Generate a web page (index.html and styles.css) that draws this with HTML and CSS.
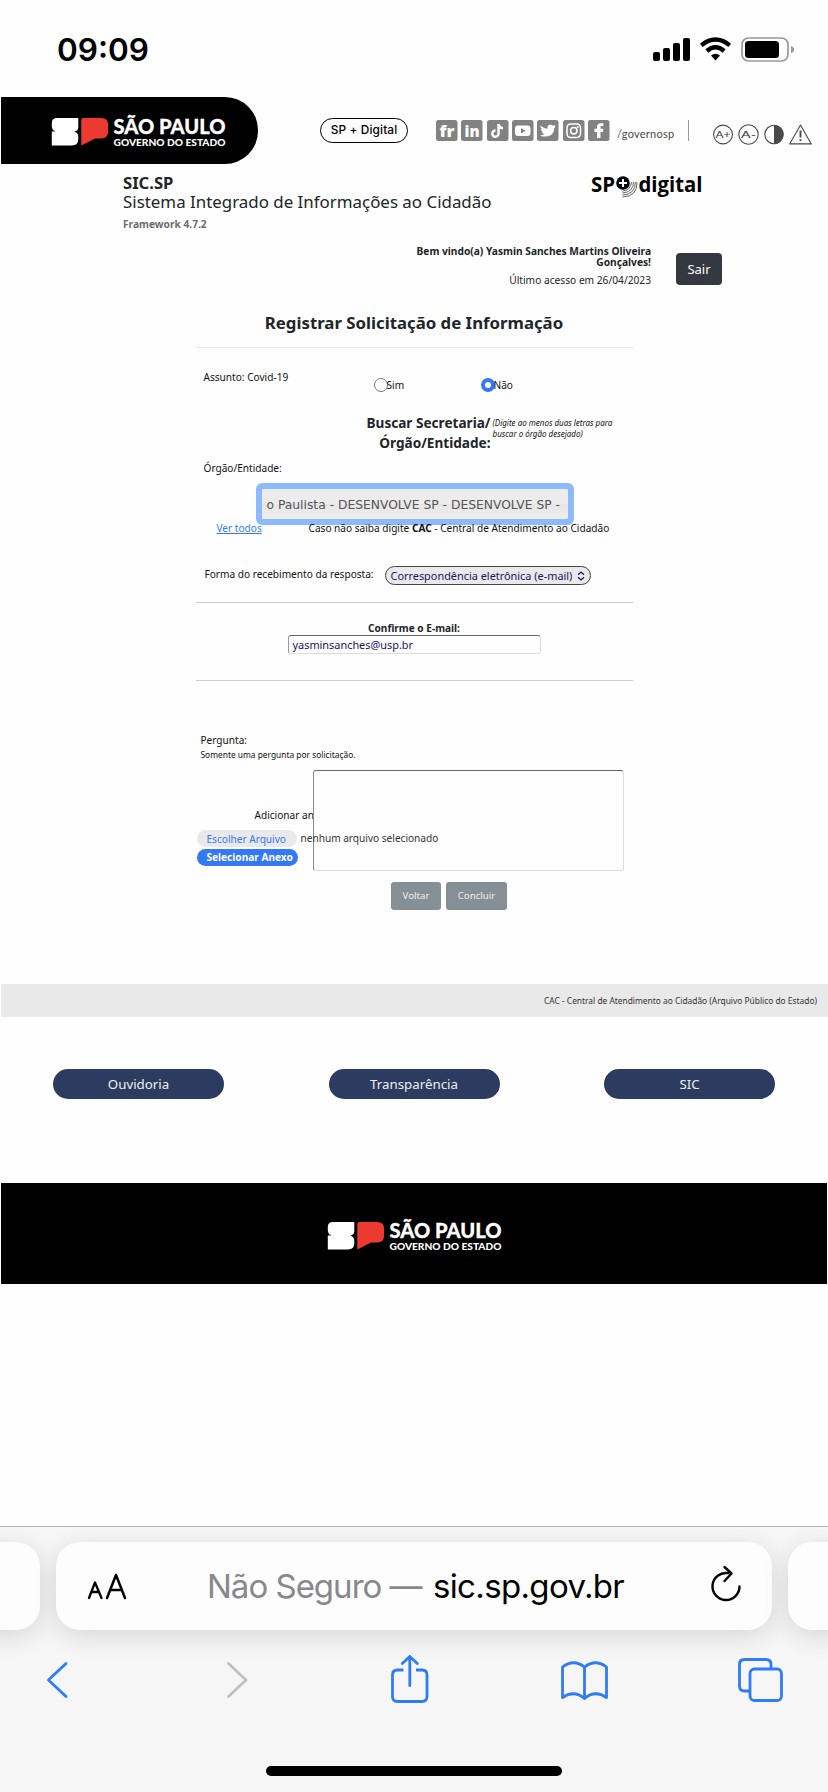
FILE: index.html
```html
<!DOCTYPE html>
<html lang="pt-BR">
<head>
<meta charset="utf-8">
<title>SIC.SP</title>
<link rel="stylesheet" href="styles.css">
</head>
<body>
<svg width="0" height="0" class="defs">
  <symbol id="sp-logo" viewBox="0 0 176 34">
    <path fill="#fff" d="M6 5H27.300V14.500Q27.300 17 25 18L23.500 18.700Q27.300 19.500 27.300 24V26Q27.300 32.500 21 32.500H.8V18.500H4.500Q.8 17 .8 13V10Q.8 5 6 5Z"/>
    <path fill="#ec3a31" d="M32 5H50Q57 5 57 11V19Q57 25.500 50 25.500H44L30.300 32.500V7Q30.300 5 32 5Z"/>
    <text x="62.500" y="20.500" class="logo-a" textLength="112" lengthAdjust="spacingAndGlyphs">SÃO PAULO</text>
    <text x="62.500" y="32.600" class="logo-b" textLength="112" lengthAdjust="spacingAndGlyphs">GOVERNO DO ESTADO</text>
  </symbol>
</svg>

<header class="status">
  <span class="clock">09:09</span>
  <svg width="144" height="26" viewBox="0 0 144 26">
    <rect x="0" y="15" width="7" height="9" rx="2"/><rect x="10" y="11" width="7" height="13" rx="2"/><rect x="20" y="6" width="7" height="18" rx="2"/><rect x="30" y="1" width="7" height="23" rx="2"/>
    <g fill="none" stroke="#000" stroke-width="4.300"><path d="M48.300 8.300Q62.500-3.300 76.700 8.300"/><path d="M53.800 14Q62.500 6.500 71.200 14"/></g>
    <path d="M58 18.500Q62.500 14.800 67 18.500L62.500 23.500Z"/>
    <rect x="89" y="1" width="46" height="23" rx="6.500" fill="none" stroke="#999" stroke-width="1.700"/>
    <rect x="92" y="4" width="34" height="17" rx="3.500"/>
    <path fill="#999" d="M138 9Q141 10 141 12.500T138 16Z"/>
  </svg>
</header>

<section class="top">
  <div class="brand"><svg width="176" height="34"><use href="#sp-logo"/></svg></div>
  <a class="digital">SP + Digital</a>
  <svg class="social" width="175" height="22" viewBox="0 0 175 22">
    <g fill="#828282"><rect width="21.500" height="21" rx="2.500"/><rect x="25" width="21.500" height="21" rx="2.500"/><rect x="51" width="21.500" height="21" rx="2.500"/><rect x="76" width="21.500" height="21" rx="2.500"/><rect x="101" width="21.500" height="21" rx="2.500"/><rect x="127" width="21.500" height="21" rx="2.500"/><rect x="152" width="21.500" height="21" rx="2.500"/></g>
    <text x="3.500" y="16.500" class="soc" textLength="15" lengthAdjust="spacingAndGlyphs">fr</text>
    <text x="28.500" y="16.500" class="soc" textLength="15" lengthAdjust="spacingAndGlyphs">in</text>
    <path d="M62.500 4V13.500A3.100 3.100 0 1 1 59.500 10.500M62.500 4Q63.200 8 67 8.200" fill="none" stroke="#fff" stroke-width="2.400"/>
    <rect x="79" y="5.500" width="15.500" height="10.500" rx="3" fill="#fff"/><path d="M85 8V13.500L89.500 10.700Z" fill="#828282"/>
    <path fill="#fff" d="M104.500 5.500Q107.500 8.500 111.500 8.700Q111 5.500 113.500 4.800Q115.500 4.200 117 5.700L119.400 4.900L118.300 6.700L120 6.300L118.300 8.200Q118.300 12.500 115 15Q110 18 104 15.400Q107 15.400 108.500 14Q106.300 13.500 105.700 11.800H107Q104.800 11 104.600 9L106 9.300Q104 7.500 104.500 5.500Z"/>
    <g fill="none" stroke="#fff" stroke-width="1.500"><rect x="131" y="4" width="13.500" height="13.500" rx="3.700"/><circle cx="137.800" cy="10.700" r="3.200"/></g><circle cx="141.700" cy="6.900" r="1" fill="#fff"/>
    <path fill="#fff" d="M161 18V12H158.500V8.700H161V7Q161 3.200 165 3.200H167.300V6.100H165.800Q164.500 6.100 164.500 7.400V8.700H167.300L166.800 12H164.500V18Z"/>
  </svg>
  <span class="gov">/governosp</span>
  <i class="sep"></i>
  <svg class="access" width="100" height="22" viewBox="0 0 100 22">
    <g fill="none" stroke="#4a4a4a" stroke-width="1.100"><circle cx="10" cy="10.500" r="9.400"/><circle cx="35.500" cy="10.500" r="9.700"/><circle cx="61" cy="10.500" r="9.200"/><path d="M87.500 1L98.300 19.900H76.700Z" stroke-linejoin="round"/></g>
    <path fill="#4a4a4a" d="M61 1A9.500 9.500 0 0 1 61 20Z"/>
    <text x="2.500" y="13.800" class="acc" textLength="15" lengthAdjust="spacingAndGlyphs">A+</text><text x="28" y="13.800" class="acc" textLength="15" lengthAdjust="spacingAndGlyphs">A-</text>
    <path d="M87.500 6.500V13.500M87.500 15.200V17" stroke="#4a4a4a" stroke-width="1.900"/>
  </svg>
</section>

<section class="intro">
  <div class="names">
    <strong class="n1">SIC.SP</strong>
    <span class="n2">Sistema Integrado de Informações ao Cidadão</span>
    <strong class="n3">Framework 4.7.2</strong>
  </div>
  <svg class="spd" width="114" height="28" viewBox="0 0 114 28">
    <text x="0" y="19" class="spd-t" textLength="24" lengthAdjust="spacingAndGlyphs">SP</text>
    <circle cx="32" cy="10" r="6.800"/><path d="M28 10H36M32 6V14" stroke="#fff" stroke-width="2"/>
    <g fill="none" stroke="#000" stroke-width=".6"><path d="M40.500 9Q40 17 31.500 18"/><path d="M42.500 9Q42.500 19 31.500 20"/><path d="M44.300 9Q44.500 21.500 31.500 22"/><path d="M46 9Q46.500 23.500 31.500 24"/></g>
    <text x="47.500" y="19" class="spd-t" textLength="64" lengthAdjust="spacingAndGlyphs">digital</text>
  </svg>
</section>

<section class="user">
  <div class="hello"><strong>Bem vindo(a) Yasmin Sanches Martins Oliveira<br>Gonçalves!</strong><span>Último acesso em 26/04/2023</span></div>
  <button class="exit">Sair</button>
</section>

<main class="form">
  <h1>Registrar Solicitação de Informação</h1>
  <div class="row subject">
    <span class="lbl">Assunto: Covid-19</span>
    <span class="opt"><i class="radio"></i>Sim</span>
    <span class="opt no"><i class="radio on"></i>Não</span>
  </div>
  <div class="row search">
    <h2>Buscar Secretaria/<br>Órgão/Entidade:</h2>
    <em>(Digite ao menos duas letras para<br>buscar o órgão desejado)</em>
  </div>
  <div class="lbl org">Órgão/Entidade:</div>
  <div class="field">o Paulista - DESENVOLVE SP - DESENVOLVE SP -</div>
  <div class="row hint"><a>Ver todos</a><span>Caso não saiba digite <b>CAC</b> - Central de Atendimento ao Cidadão</span></div>
  <div class="row reply">
    <span class="lbl2">Forma do recebimento da resposta:</span>
    <span class="select"><span>Correspondência eletrônica (e-mail)</span><svg width="8" height="10" viewBox="0 0 8 10"><path d="M1 3.800L4 1.100L7 3.800M1 6.200L4 8.900L7 6.200" fill="none" stroke="#1b1464" stroke-width="1.300"/></svg></span>
  </div>
  <div class="mail"><strong>Confirme o E-mail:</strong><div class="mailbox">yasminsanches@usp.br</div></div>
  <div class="ask"><span class="a1">Pergunta:</span><span class="a2">Somente uma pergunta por solicitação.</span></div>
  <div class="attach">
    <span class="add">Adicionar an</span>
    <div class="area"></div>
    <div class="pick"><span class="choose">Escolher Arquivo</span><span class="none">nenhum arquivo selecionado</span></div>
    <span class="sel">Selecionar Anexo</span>
  </div>
  <div class="actions"><button>Voltar</button><button class="b2">Concluir</button></div>
</main>

<div class="band"><span>CAC - Central de Atendimento ao Cidadão (Arquivo Público do Estado)</span></div>
<nav class="links"><a>Ouvidoria</a><a>Transparência</a><a>SIC</a></nav>
<footer class="foot"><svg width="176" height="34"><use href="#sp-logo"/></svg></footer>

<section class="browser">
  <div class="tabs">
    <div class="tab"></div>
    <div class="tab main">
      <svg width="40" height="28" viewBox="0 0 40 28"><g fill="none" stroke="#000" stroke-linecap="round" stroke-linejoin="round"><path stroke-width="2.300" d="M2 26L8 10.500L14.500 26M4.200 20H12.200"/><path stroke-width="2.500" d="M20 26L29 3L38 26M23.500 18H34.500"/></g></svg>
      <div class="url"><span class="u1">Não Seguro —</span><span class="u2">sic.sp.gov.br</span></div>
      <svg class="reload" width="32" height="38" viewBox="0 0 32 38"><path d="M19 8.100A13.500 13.500 0 1 0 30.500 21.500M15.500 2L22.500 8.500L15.500 16" fill="none" stroke="#000" stroke-width="2.400" stroke-linecap="round" stroke-linejoin="round"/></svg>
    </div>
    <div class="tab"></div>
  </div>
  <svg class="tools" width="828" height="60" viewBox="0 1650 828 60">
    <g fill="none" stroke="#2f7cf6" stroke-width="2.800" stroke-linecap="round" stroke-linejoin="round">
      <path d="M66 1663.500L48.500 1680L66 1696.500"/>
      <path stroke="#bfbfbf" d="M228.500 1663.500L246 1680L228.500 1696.500"/>
      <path stroke-linecap="butt" d="M403.500 1670H397.500Q392.500 1670 392.500 1675V1696.500Q392.500 1701.500 397.500 1701.500H422Q427 1701.500 427 1696.500V1675Q427 1670 422 1670H416"/>
      <path d="M409.800 1685.500V1656.500M402.300 1663.500L409.800 1656.500L417.300 1663.500"/>
      <path d="M584.500 1698.500Q574 1689.500 562.500 1697.500V1667Q573.500 1658.500 584.500 1667Q595.500 1658.500 606.500 1667V1697.500Q595 1689.500 584.500 1698.500V1667"/>
      <path stroke-linecap="butt" d="M749 1691H744.500Q739.500 1691 739.500 1686V1664.500Q739.500 1659.500 744.500 1659.500H766Q771 1659.500 771 1664.500V1668.500"/>
      <rect x="750" y="1669" width="31.500" height="31.500" rx="4.500"/>
    </g>
  </svg>
  <div class="home"></div>
</section>
</body>
</html>
```
FILE: styles.css
```css
* { box-sizing: border-box; }
body { margin: 0; width: 828px; height: 1792px; overflow: hidden; display: flex; flex-direction: column; background: #fefefe; color: #212529; font-family: "Noto Sans", "Open Sans", sans-serif; white-space: nowrap; }
svg { display: block; flex: none; }
button { font: inherit; border: 0; padding: 0; }
.defs { position: absolute; }
.logo-a { font: 900 20.500px Lato, sans-serif; fill: #fff; stroke: #fff; stroke-width: .3; }
.logo-b { font: 900 9.800px Lato, sans-serif; fill: #fff; }

.status { height: 97px; flex: none; display: flex; justify-content: space-between; padding: 37px 31px 0 57px; }
.clock { font: 600 31.500px/26px Inter, sans-serif; color: #000; }

.top { height: 67px; flex: none; display: flex; }
.brand { width: 257px; height: 67px; margin-left: 1px; padding: 18px 0 0 50px; border-radius: 0 33px 33px 0; background: #000; }
.brand svg { margin-top: -2px; }
.digital { width: 88px; height: 25px; margin: 21px 0 0 62px; border: 1px solid #000; border-radius: 13px; color: #000; font: 500 11.800px/23px Inter, sans-serif; letter-spacing: .15px; text-align: center; }
.social { margin: 23px 0 0 28px; }
.soc { font: 800 16px "Open Sans", sans-serif; fill: #fff; }
.gov { width: 57px; margin: 29px 0 0 6px; font: 11px/16px Lato, sans-serif; color: #4a4a4a; letter-spacing: .25px; }
.sep { width: 1px; height: 21px; margin: 23px 0 0 14px; background: #999; }
.access { margin: 27px 0 0 24px; }
.acc { font: 10px Lato, sans-serif; fill: #333; }

.intro { height: 76px; flex: none; display: flex; justify-content: space-between; padding: 9px 123px 0 123px; }
.names { display: flex; flex-direction: column; }
.n1 { font-size: 16.600px; line-height: 20px; }
.n2 { font-size: 16.900px; line-height: 18px; }
.n3 { margin-top: 6px; font-size: 10.200px; line-height: 14px; color: #6c6c6c; }
.spd-t { font: 700 22px "Open Sans", sans-serif; }

.user { height: 60px; flex: none; display: flex; justify-content: flex-end; padding-right: 106px; }
.hello { display: flex; flex-direction: column; text-align: right; margin: 6px 25px 0 0; font-size: 10.200px; line-height: 11px; }
.hello span { margin-top: 6px; line-height: 13px; }
.exit { width: 46px; height: 32px; margin-top: 13px; border-radius: 4px; background: #343840; color: #fff; font-size: 13px; }

.form { width: 437px; height: 684px; flex: none; margin-left: 195.500px; color: #111; font-size: 10.100px; line-height: 14px; display: flex; flex-direction: column; }
.form h1 { margin: 0; height: 48px; padding-top: 11px; border-bottom: 1px solid #e8e8e8; color: #212529; font-size: 16.800px; line-height: 24px; text-align: center; }
.row { display: flex; flex: none; }
.subject { height: 65px; padding: 22px 0 0 8px; }
.subject .lbl { width: 170px; }
.opt { display: flex; margin-top: 8px; width: 107px; align-items: center; height: 14px; }
.radio { width: 14px; height: 14px; flex: none; border: 1px solid #777; border-radius: 50%; background: #fff; margin: 0 -1px 0 0; }
.radio.on { border: 4px solid #3478f6; }
.search { height: 48px; }
.search h2 { width: 295px; margin: 0; color: #212529; font-size: 13.600px; line-height: 20px; text-align: right; }
.search em { margin: 4px 0 0 2px; font-size: 8px; line-height: 11px; }
.org { height: 22px; padding-left: 8px; }
.field { width: 306px; height: 30px; flex: none; margin: 6px 0 0 66px; padding-left: 5px; border-radius: 2px; background: linear-gradient(#ececec 50%, #e6e6e6 51%, #eee); box-shadow: 0 0 0 6px #8dbafc; color: #555; font: 12.300px/33px "DejaVu Sans", sans-serif; }
.hint { position: relative; height: 44px; padding: 2px 0 0 21px; line-height: 14px; }
.hint a { width: 92px; color: #2f7cf6; text-decoration: underline; }
.reply { height: 40px; padding-left: 9px; border-bottom: 1px solid #ccc; }
.lbl2 { width: 180px; padding-top: 4px; }
.select { width: 206px; height: 19px; margin-top: 3px; border: 1px solid #444; border-radius: 10px; background: #e9e9e9; color: #1b1464; font-size: 10.900px; line-height: 18px; display: flex; align-items: center; justify-content: space-between; padding: 0 5px; }
.mail { height: 78px; flex: none; padding-top: 18px; border-bottom: 1px solid #ccc; text-align: center; }
.mail strong { display: block; color: #212529; line-height: 14px; }
.mailbox { width: 253px; height: 19px; margin: 0 0 0 92px; padding-left: 4px; border: 1px solid #ddd; border-top-color: #666; border-left-color: #999; border-radius: 3px; color: #1b1464; font-size: 10.900px; line-height: 18px; text-align: left; }
.ask { height: 89px; flex: none; padding: 52px 0 0 5px; display: flex; flex-direction: column; }
.a2 { font-size: 8.400px; line-height: 16px; }
.attach { height: 101px; flex: none; position: relative; display: flex; flex-direction: column; }
.add { padding: 38px 0 0 59px; height: 60px; }
.area { position: absolute; left: 117px; top: 0; width: 311px; height: 101px; border: 1px solid #ddd; border-top-color: #666; border-left-color: #888; border-radius: 3px; background: #fefefe; }
.pick { position: relative; display: flex; height: 19px; }
.choose { width: 100px; height: 17px; border-radius: 9px; background: #e9e9e9; color: #3478f6; padding-left: 10px; line-height: 19px; }
.none { margin-left: 4px; line-height: 17px; color: #333; }
.sel { width: 101px; height: 17px; border-radius: 9px; background: #3478f6; color: #fff; font-weight: 700; padding-left: 10px; line-height: 17px; }
.choose, .sel { margin-left: 1px; }
.actions { display: flex; gap: 5px; padding: 11px 0 0 195.500px; }
.actions button { width: 50px; height: 28px; border-radius: 3px; background: #868e96; color: #eee; font-size: 9.700px; }
.actions .b2 { width: 61px; }

.band { height: 33px; flex: none; margin: 0 0 0 1px; padding-right: 11px; background: #e9e9e9; text-align: right; font-size: 8.400px; line-height: 33px; color: #333; }
.links { height: 166px; flex: none; display: flex; justify-content: space-between; padding: 52px 53px 0; }
.links a { width: 171px; height: 30px; border-radius: 15px; background: #2b3c60; color: #eee; font-size: 13.300px; line-height: 31px; text-align: center; }
.foot { height: 101px; flex: none; margin: 0 1px; padding: 34px 0 0 326px; background: #000; }

.browser { margin-top: 242px; height: 266px; flex: none; border-top: 1px solid #b5b5b5; background: #f6f6f6; overflow: hidden; }
.tabs { display: flex; gap: 16px; padding-top: 15px; margin: 0 -40px; }
.tab { width: 80px; height: 88px; flex: none; border-radius: 24px; background: #fdfdfd; box-shadow: 0 6px 26px rgba(0,0,0,.13); }
.tab.main { width: 716px; display: flex; padding-left: 31px; }
.tab.main > svg:first-child { margin-top: 30px; }
.url { width: 530px; flex: none; display: flex; padding-left: 80px; gap: 9px; font: 33px/88px Inter, sans-serif; color: #000; }
.u1 { width: 217px; flex: none; color: #88888c; letter-spacing: -1px; }
.u2 { letter-spacing: -.65px; }
.reload { margin: 23px 0 0 52px; }
.tools { margin-top: 20px; }
.home { width: 296px; height: 10px; margin: 56px auto 0; border-radius: 5px; background: #000; }
```
